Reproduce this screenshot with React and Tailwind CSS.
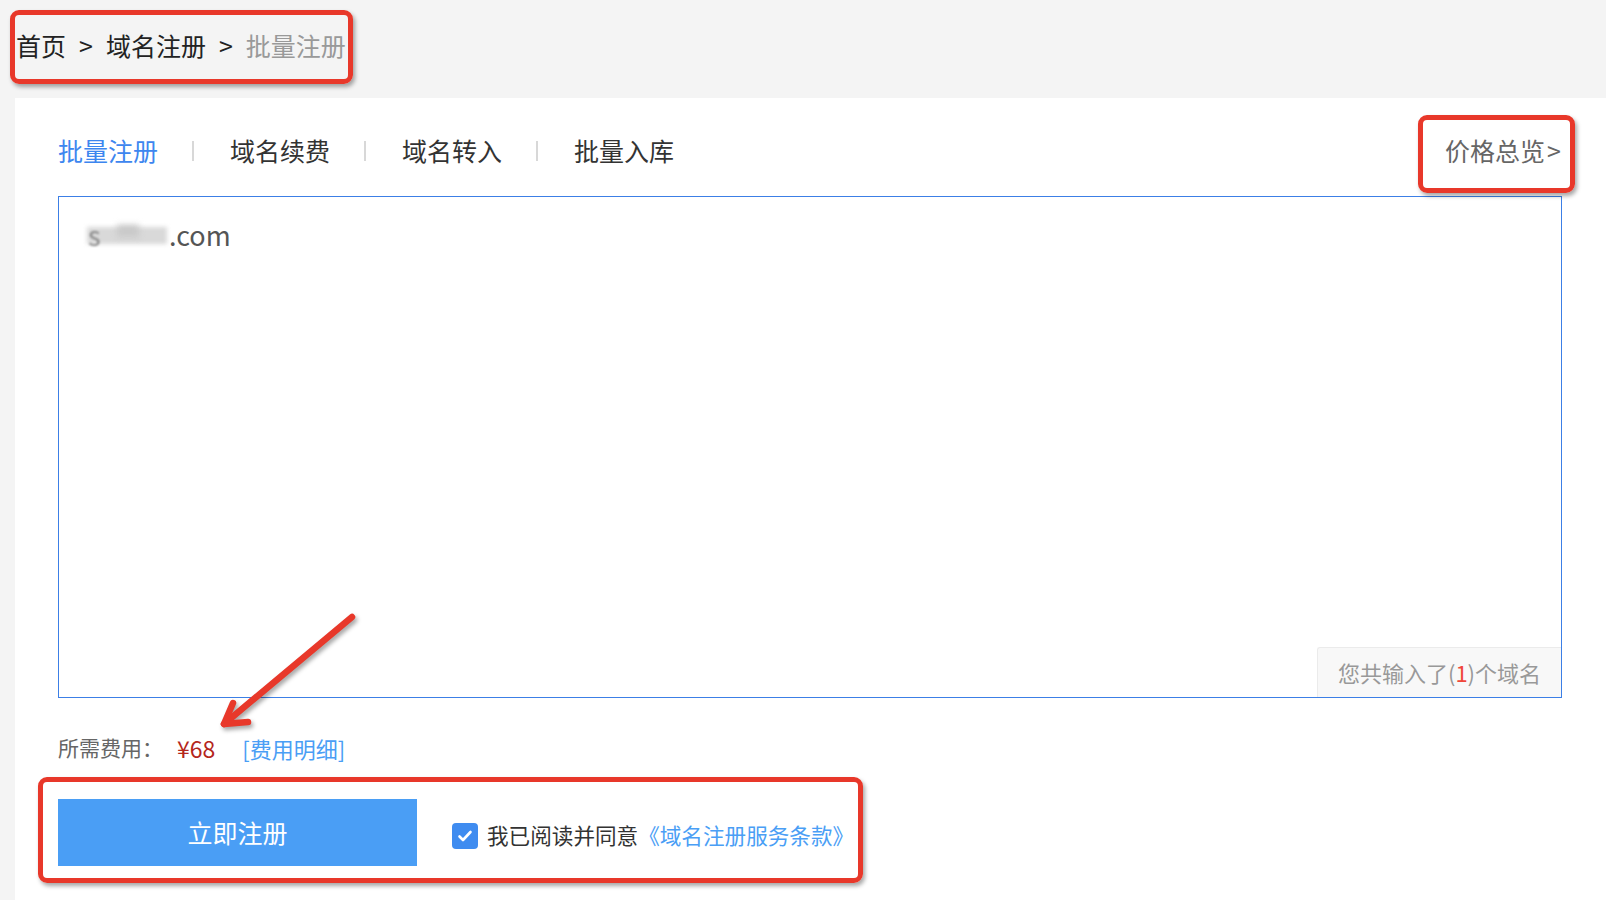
import React from "react";

const tabs = ["批量注册", "域名续费", "域名转入", "批量入库"];

const Mark = ({ className }) => (
  <div
    className={`pointer-events-none absolute rounded-[9px] border-[5px] border-[#e8382a] shadow-[2px_3px_4px_rgba(0,0,0,0.35)] ${className}`}
  />
);

const App = () => {
  return (
    <div
      className="relative h-[900px] w-[1606px] overflow-hidden bg-[#f4f4f4] text-[#333]"
      style={{ fontFamily: '"Noto Sans CJK SC", "Noto Sans", sans-serif' }}
    >
      {/* breadcrumb */}
      <div className="flex h-[98px] items-center pl-[16px] pb-[7px] text-[25px] text-[#222]">
        <span>首页</span>
        <span className="mx-[13px]">&gt;</span>
        <span>域名注册</span>
        <span className="mx-[13px]">&gt;</span>
        <span className="text-[#999]">批量注册</span>
      </div>

      {/* panel */}
      <div className="ml-[15px] h-[802px] bg-white pl-[43px] pr-[44px] pt-[35px]">
        <div className="mb-[27px] flex h-[36px] items-center justify-between">
          <div className="flex items-center text-[25px]">
            {tabs.map((t, i) => (
              <React.Fragment key={t}>
                {i > 0 && <span className="ml-[34px] mr-[36px] h-[20px] w-[2px] bg-[#d8d8d8]" />}
                <span className={i === 0 ? "text-[#3d86ef]" : "text-[#333]"}>{t}</span>
              </React.Fragment>
            ))}
          </div>
          <span className="mr-[1px] text-[25px] text-[#666]">
            价格总览<span className="ml-[2px]">&gt;</span>
          </span>
        </div>

        <div className="relative h-[502px] border border-[#3c7fe6] pl-[28px] pt-[18px]">
          <div className="flex items-center text-[27px] text-[#555]">
            <span className="relative inline-block h-[22px] w-[82px]">
              <span className="absolute left-0 top-[3px] h-[17px] w-[80px] bg-[#d9d9d9] blur-[2px]" />
              <span className="absolute left-[30px] top-[1px] h-[12px] w-[22px] bg-[#c9c9c9] blur-[3px]" />
              <span className="absolute left-[1px] top-[-9px] text-[27px] text-[#888] blur-[1px]">s</span>
            </span>
            <span>.com</span>
          </div>

          <div className="absolute bottom-0 right-0 flex h-[50px] w-[244px] items-center justify-center rounded-tl-[3px] border-l border-t border-[#ebebeb] bg-[#f8f8f8] text-[22px] text-[#999]">
            您共输入了(<span className="text-[#f0463a]">1</span>)个域名
          </div>
        </div>

        <div className="mt-[36px] flex h-[28px] items-center text-[21px]">
          <span className="text-[#666]">所需费用：</span>
          <span className="ml-[14px] text-[23px] text-[#b4261c]">¥68</span>
          <span className="ml-[27px] text-[22px] text-[#4a9ef5]">[费用明细]</span>
        </div>

        <div className="mt-[37px] flex items-center">
          <button className="h-[67px] w-[359px] bg-[#4a9ef5] text-[25px] text-white">
            立即注册
          </button>
          <span className="ml-[35px] mt-[7px] flex h-[26px] w-[26px] items-center justify-center rounded-[4px] bg-[#3f8cf0]">
            <svg width="18" height="18" viewBox="0 0 18 18" fill="none">
              <path d="M3.5 9.5l3.5 3.5 7.5-8" stroke="white" strokeWidth="2.6" strokeLinecap="round" strokeLinejoin="round" />
            </svg>
          </span>
          <span className="ml-[9px] mt-[6px] text-[21.6px] text-[#333]">我已阅读并同意</span>
          <span className="mt-[6px] text-[21.6px] text-[#4a9ef5]">《域名注册服务条款》</span>
        </div>
      </div>

      {/* annotations */}
      <Mark className="left-[10px] top-[10px] h-[74px] w-[343px]" />
      <Mark className="left-[1418px] top-[115px] h-[78px] w-[157px]" />
      <Mark className="left-[38px] top-[777px] h-[106px] w-[825px]" />

      <svg
        className="pointer-events-none absolute left-0 top-0"
        width="1606"
        height="900"
        style={{ filter: "drop-shadow(2px 3px 2px rgba(0,0,0,0.35))" }}
      >
        <g stroke="#e8382a" strokeWidth="6.5" strokeLinecap="round" strokeLinejoin="round" fill="none">
          <path d="M352 617 L224 724" />
          <path d="M233 703 L224 724 L248 722" />
        </g>
      </svg>
    </div>
  );
};

export default App;
